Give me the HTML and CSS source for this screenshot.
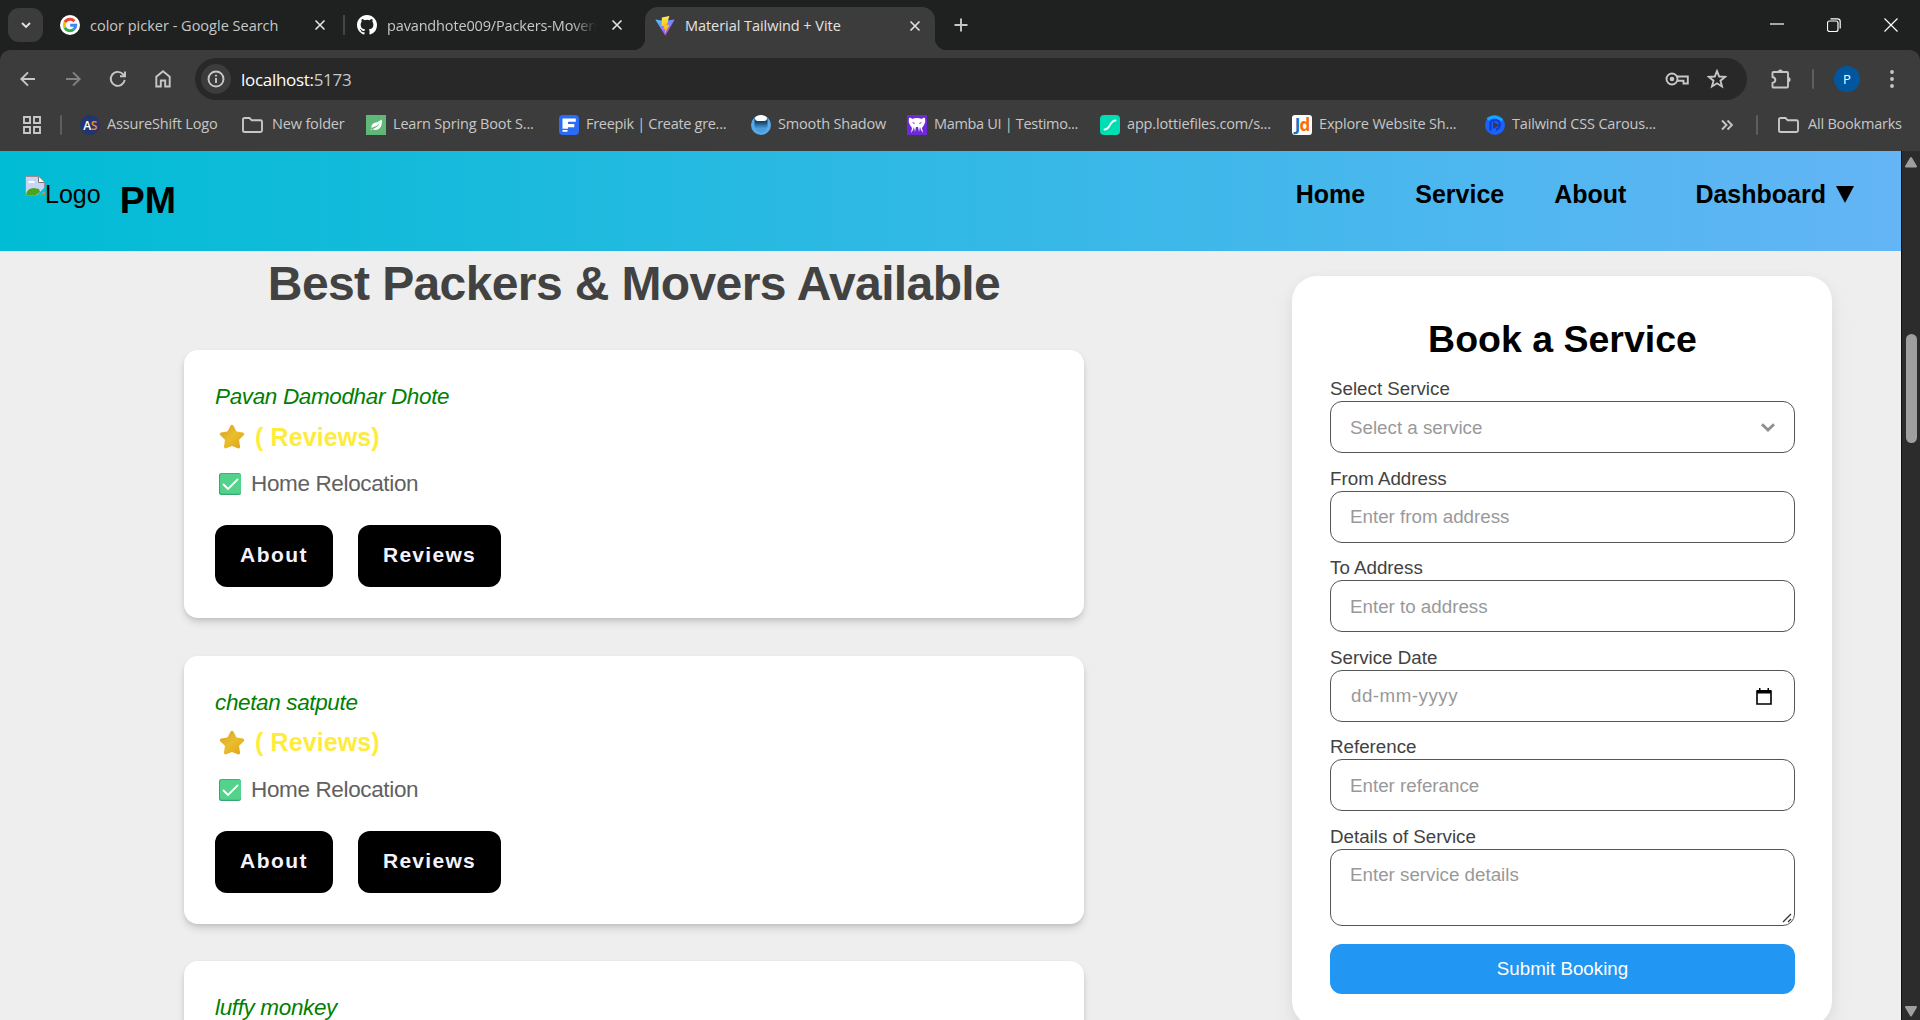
FILE: index.html
```html
<!DOCTYPE html>
<html lang="en">
<head>
<meta charset="utf-8">
<title>Material Tailwind + Vite</title>
<link rel="stylesheet" href="styles.css">
</head>
<body>
<div class="browser">
  <div class="tabstrip">
    <div class="tab-search"><svg width="14" height="14" viewBox="0 0 14 14"><path d="M3 5l4 4 4-4" class="line"/></svg></div>
    <div class="tab tab-one">
      <svg class="fav" viewBox="0 0 48 48"><circle cx="24" cy="24" r="24" fill="#fff"/><g fill="none" stroke-width="7"><path d="M34.5 14.8A14 14 0 0 0 11.7 17.5" stroke="#ea4335"/><path d="M11.7 17.5a14 14 0 0 0 0 13" stroke="#fbbc05"/><path d="M11.7 30.5A14 14 0 0 0 33 34.7" stroke="#34a853"/><path d="M33 34.7A14 14 0 0 0 37.8 24.5H24.5" stroke="#4285f4"/></g></svg>
      <span class="tab-title t1">color picker - Google Search</span>
      <svg class="x" viewBox="0 0 12 12"><path d="M1.5 1.5l9 9m0-9l-9 9" class="line"/></svg>
    </div>
    <i class="tab-sep"></i>
    <div class="tab tab-two">
      <svg class="fav" viewBox="0 0 16 16"><path fill="#fff" d="M8 0C3.58 0 0 3.58 0 8c0 3.54 2.29 6.53 5.47 7.59.4.07.55-.17.55-.38 0-.19-.01-.82-.01-1.49-2.01.37-2.53-.49-2.69-.94-.09-.23-.48-.94-.82-1.13-.28-.15-.68-.52-.01-.53.63-.01 1.08.58 1.23.82.72 1.21 1.87.87 2.33.66.07-.52.28-.87.51-1.07-1.78-.2-3.64-.89-3.64-3.95 0-.87.31-1.59.82-2.15-.08-.2-.36-1.02.08-2.12 0 0 .67-.21 2.2.82a7.6 7.6 0 0 1 4 0c1.53-1.04 2.2-.82 2.2-.82.44 1.1.16 1.92.08 2.12.51.56.82 1.27.82 2.15 0 3.07-1.87 3.75-3.65 3.95.29.25.54.73.54 1.48 0 1.07-.01 1.93-.01 2.2 0 .21.15.46.55.38A8 8 0 0 0 16 8c0-4.42-3.58-8-8-8z"/></svg>
      <span class="tab-title t2">pavandhote009/Packers-Movers</span>
      <svg class="x" viewBox="0 0 12 12"><path d="M1.5 1.5l9 9m0-9l-9 9" class="line"/></svg>
    </div>
    <div class="tab tab-active">
      <svg class="fav" viewBox="0 0 32 32"><defs><linearGradient id="va" x1="0" y1="0" x2=".7" y2="1"><stop stop-color="#41d1ff"/><stop offset="1" stop-color="#bd34fe"/></linearGradient><linearGradient id="vb" x1="0" y1="0" x2="0" y2="1"><stop stop-color="#ffea83"/><stop offset=".2" stop-color="#ffdd35"/><stop offset="1" stop-color="#ffa800"/></linearGradient></defs><path fill="url(#va)" d="M.5 5.500L15 8l16.500-2.500L16.500 31.500z"/><path fill="url(#vb)" d="M23 0L11 2.300l-.8 14.200 4.500-1-1.300 6 3.200-.8-1.500 8.500 8.400-15.500-4.800.9z"/></svg>
      <span class="tab-title t3">Material Tailwind + Vite</span>
      <svg class="x" viewBox="0 0 12 12"><path d="M1.5 1.500l9 9m0-9l-9 9" class="line"/></svg>
    </div>
    <svg class="plus" viewBox="0 0 14 14"><path d="M7 .5v13M.5 7h13" class="line"/></svg>
    <div class="window-buttons">
      <svg width="14" height="14" viewBox="0 0 14 14"><path d="M0 6h14" class="thin"/></svg>
      <svg width="14" height="14" viewBox="0 0 14 14"><rect x=".5" y="3" width="10.500" height="10.500" rx="2" class="thin"/><path d="M3.500 .8h7a2.700 2.700 0 0 1 2.700 2.700v7" class="thin"/></svg>
      <svg width="14" height="14" viewBox="0 0 14 14"><path d="M.5.5l13 13m0-13l-13 13" class="thin"/></svg>
    </div>
  </div>
  <div class="toolbar">
    <svg class="tool" viewBox="0 0 20 20"><path d="M17 10H3.500M10 3.300L3.300 10l6.700 6.700" class="line"/></svg>
    <svg class="tool dim" viewBox="0 0 20 20"><path d="M3 10h13.500M10 3.300l6.700 6.700-6.700 6.700" class="line"/></svg>
    <svg class="tool" viewBox="0 0 20 20"><path d="M16.700 10.800A7 7 0 1 1 15 5.200l1.800 1.800M17 2.500V7.300h-5" class="line"/></svg>
    <svg class="tool" viewBox="0 0 20 20"><path d="M3.300 17.500V7.700L10 2.200l6.700 5.500v9.800h-4.500v-6H7.800v6z" class="line"/></svg>
    <div class="omnibox">
      <div class="info"><svg width="18" height="18" viewBox="0 0 18 18"><circle cx="9" cy="9" r="7.500" class="line"/><path d="M9 8v5M9 4.800v1.700" class="line"/></svg></div>
      <span class="url">localhost:<span class="port">5173</span></span>
      <svg class="key" viewBox="0 0 24 16"><circle cx="7" cy="8" r="5.500" class="line"/><circle cx="7" cy="8" r="2.300" fill="#c7c7c7"/><path d="M12 5.500h10.800v7h-4.300V9.800H12" class="line"/></svg>
      <svg class="tool star-tool" viewBox="0 0 20 20"><path d="M10 2l2.200 5.500 5.800.4-4.500 3.800 1.500 5.800-5-3.200-5 3.200 1.500-5.800L2 7.900l5.800-.4z" class="line"/></svg>
    </div>
    <svg class="tool puzzle" viewBox="0 0 20 20"><path d="M1.500 4Q1.500 3 2.500 3H16q1 0 1 1v13.500q0 1-1 1H2.500q-1 0-1-1V14c3.800-1 3.800-5 0-6z" class="line"/><path d="M6.700 3a2.600 2.600 0 0 1 5.200 0zM17 8a2.600 2.600 0 0 1 0 5.200z" fill="#c7c7c7"/></svg>
    <i class="bar-sep"></i>
    <div class="avatar">P</div>
    <svg class="dots" viewBox="0 0 6 20"><circle cx="3" cy="3" r="1.900"/><circle cx="3" cy="10" r="1.900"/><circle cx="3" cy="17" r="1.900"/></svg>
  </div>
  <div class="bookmarks">
    <svg class="apps" viewBox="0 0 18 18"><path d="M1 1h6v6H1zM11 1h6v6h-6zM1 11h6v6H1zM11 11h6v6h-6z" class="line"/></svg>
    <i class="bar-sep"></i>
    <div class="bm b1"><span class="bi as"><b>A</b><b class="s">S</b></span><span class="bt">AssureShift Logo</span></div>
    <div class="bm b2"><svg class="folder" viewBox="0 0 21 16"><path d="M1 2.500Q1 1 2.500 1h5l2.300 2.300h8.700q1.500 0 1.500 1.500v8.700q0 1.500-1.500 1.500h-16Q1 15 1 13.500z" class="line"/></svg><span class="bt">New folder</span></div>
    <div class="bm b3"><svg class="bi" viewBox="0 0 20 20"><path fill="#5fb878" d="M0 0h20v20H0z"/><path fill="#fff" d="M15.800 4.500c.6 5-1 10.500-6.500 10.500-1.500 0-2.500-.6-3-.9 3.500-.7 6.500-3 7.500-6-2 2.800-5.500 4-8.300 4.800C4.500 7 12 8 15.800 4.500zM4.300 14.500l1.500-.8v1.300z"/></svg><span class="bt">Learn Spring Boot S...</span></div>
    <div class="bm b4"><svg class="bi" viewBox="0 0 20 20"><rect width="20" height="20" rx="4" fill="#2b6cf6"/><path d="M3.500 3.500h13.300v3.200H9V9h6.300v3.200H9v1.600H3.500zM3.500 15h5v1.800h-5z" fill="#fff"/></svg><span class="bt">Freepik | Create gre...</span></div>
    <div class="bm b5"><svg class="bi" viewBox="0 0 20 20"><defs><linearGradient id="sm" x1="0" y1="0" x2="0" y2="1"><stop offset=".25" stop-color="#15436b"/><stop offset=".7" stop-color="#4c9ddd"/></linearGradient></defs><circle cx="10" cy="10" r="10" fill="#58aae8"/><path d="M3.500 3.500h13V11a6.500 6.500 0 0 1-13 0z" fill="url(#sm)"/><path d="M4 3q0-2 6-3 6 1 6 3 0 3-3 3H7Q4 6 4 3z" fill="#fff"/></svg><span class="bt">Smooth Shadow</span></div>
    <div class="bm b6"><svg class="bi" viewBox="0 0 20 20"><path fill="#6d28d9" d="M0 0h20v20H0z"/><path fill="#fff" d="M2 3q2-1 3 1 5-2 10 0 1-2 3-1 1 4-1 7l-2 3 1 5-2-3-1-3-1 5-1-5h-2l-1 5-1-5-1 3-2 3 1-5-2-3Q1 7 2 3z"/><path fill="#6d28d9" d="M5 7l3 1-1 1zM15 7l-3 1 1 1z"/></svg><span class="bt">Mamba UI | Testimo...</span></div>
    <div class="bm b7"><svg class="bi" viewBox="0 0 20 20"><rect width="20" height="20" rx="4" fill="#00ddb3"/><path d="M4.500 14.500c6 0 5-9 11-9" stroke="#fff" stroke-width="1.800" stroke-linecap="round" fill="none"/></svg><span class="bt">app.lottiefiles.com/s...</span></div>
    <div class="bm b8"><span class="bi jd"><b>J</b><b class="d">d</b></span><span class="bt">Explore Website Sh...</span></div>
    <div class="bm b9"><svg class="bi" viewBox="0 0 20 20"><circle cx="10" cy="10" r="10" fill="#1a63f7"/><path d="M2.500 4.500Q9-1 17 5.500" stroke="#13a8ff" stroke-width="3" fill="none"/><path d="M5.500 15.500V7q4-4 8.500-.5 3 5-3 8.500" stroke="#1238d8" stroke-width="2.300" fill="none"/><path d="M8 6.500l6.500 3.800L8 14z" fill="#333b55"/></svg><span class="bt">Tailwind CSS Carous...</span></div>
    <svg class="more" viewBox="0 0 12 12"><path d="M1 1.500L5.500 6 1 10.500M6.500 1.500L11 6l-4.500 4.500" class="line"/></svg>
    <i class="bar-sep last"></i>
    <div class="bm b10"><svg class="folder" viewBox="0 0 21 16"><path d="M1 2.500Q1 1 2.500 1h5l2.300 2.300h8.700q1.500 0 1.500 1.500v8.700q0 1.500-1.500 1.500h-16Q1 15 1 13.500z" class="line"/></svg><span class="bt">All Bookmarks</span></div>
  </div>
</div>
<div class="viewport">
  <div class="page">
    <header class="site-header">
      <div class="brand">
        <svg class="broken" viewBox="0 0 20 20"><path d="M.5.5h13l6 6v13H.5z" fill="#c6d5f5" stroke="#9a8c90"/><path d="M13.500.5v6h6" fill="#fff" stroke="#777"/><path d="M3 7q1-3 3-2 3-1 4 2z" fill="#fff"/><path d="M1 19q1-7 8-7l5 1 1 3-4 3z" fill="#48a51c"/><path d="M11 20l9-9v4l-5 5z" fill="#0bbcd8"/><path d="M16 19l3-2v2z" fill="#48a51c"/></svg><span class="alt">Logo</span>
        <span class="pm">PM</span>
      </div>
      <nav class="nav"><a>Home</a><a>Service</a><a class="about">About</a><a class="dash">Dashboard <svg width="18" height="17" viewBox="0 0 18 17"><path d="M0 0h18L9 17z"/></svg></a></nav>
    </header>
    <main class="content">
      <section class="listing">
        <h1>Best Packers &amp; Movers Available</h1>
        <article class="card">
          <div class="name">Pavan Damodhar Dhote</div>
          <div class="rating"><svg class="star" viewBox="0 0 26 26"><use href="#star"/></svg>( Reviews)</div>
          <div class="service"><svg class="check" viewBox="0 0 22 22"><use href="#check"/></svg>Home Relocation</div>
          <div class="actions"><button>About</button><button>Reviews</button></div>
        </article>
        <article class="card">
          <div class="name">chetan satpute</div>
          <div class="rating"><svg class="star" viewBox="0 0 26 26"><use href="#star"/></svg>( Reviews)</div>
          <div class="service"><svg class="check" viewBox="0 0 22 22"><use href="#check"/></svg>Home Relocation</div>
          <div class="actions"><button>About</button><button>Reviews</button></div>
        </article>
        <article class="card">
          <div class="name">luffy monkey</div>
        </article>
      </section>
      <form class="booking">
        <h2>Book a Service</h2>
        <div class="field"><label>Select Service</label><div class="box">Select a service<svg class="caret" viewBox="0 0 14 9"><path d="M1 1.300L7 7l6-5.700"/></svg></div></div>
        <div class="field"><label>From Address</label><div class="box">Enter from address</div></div>
        <div class="field"><label>To Address</label><div class="box">Enter to address</div></div>
        <div class="field"><label>Service Date</label><div class="box date">dd-mm-yyyy<svg class="cal" viewBox="0 0 16 17"><path d="M1 3h14v13H1z" fill="none" stroke="#000" stroke-width="1.600"/><path d="M1 2h14v3.500H1zM3 0h1.500v3H3zM11.500 0H13v3h-1.500z"/></svg></div></div>
        <div class="field"><label>Reference</label><div class="box">Enter referance</div></div>
        <div class="field"><label>Details of Service</label><div class="box area">Enter service details<svg class="grip" viewBox="0 0 10 10"><path d="M1 9l8-8M6 9l3-3"/></svg></div></div>
        <button class="submit" type="button">Submit Booking</button>
      </form>
    </main>
  </div>
  <div class="scrollbar">
    <svg width="14" height="12" viewBox="0 0 14 12"><path d="M7 2l5 8.500H2z"/></svg>
    <div class="thumb"></div>
    <svg class="down" width="14" height="12" viewBox="0 0 14 12"><path d="M7 10.500L12 2H2z"/></svg>
  </div>
</div>
<svg class="symbols" width="0" height="0"><defs>
  <linearGradient id="gold" x1="0" y1="0" x2="1" y2="1"><stop stop-color="#d9a32e"/><stop offset=".5" stop-color="#e9bf2c"/><stop offset="1" stop-color="#e0a41f"/></linearGradient>
  <symbol id="star" viewBox="0 0 26 26"><path d="M13 2.500l3.300 6.400 7.200 1.200-5.300 5.200 1.200 7.400-6.400-2.500-6.400 2.500 1.200-7.400L2.500 10.100l7.200-1.200z" fill="url(#gold)" stroke="url(#gold)" stroke-width="3.400" stroke-linejoin="round"/></symbol>
  <symbol id="check" viewBox="0 0 22 22"><rect width="22" height="22" rx="2.500" fill="#36a772"/><rect x="1" y=".7" width="21" height="20" rx="2" fill="#53d28b"/><path d="M4.500 11.500l4.500 4.500 9.500-9.500" fill="none" stroke="#fff" stroke-width="1.900" stroke-linecap="round"/></symbol>
</defs></svg>
</body>
</html>
```
FILE: styles.css
```css
* { box-sizing: border-box; }
html, body { height: 100%; }
body { margin: 0; overflow: hidden; font-family: "Liberation Sans", Arial, sans-serif; display: flex; flex-direction: column; background: #eee; }
svg { flex: none; display: block; }
.line { fill: none; stroke: #c7c7c7; stroke-width: 1.9; }
.thin { fill: none; stroke: #fff; stroke-width: 1.2; }

.browser { height: 151px; flex: none; background: #1f2120; color: #c7c7c7; font-family: "Open Sans", "Noto Sans", sans-serif; font-size: 14.5px; }
.tabstrip { height: 50px; display: flex; align-items: center; padding-left: 8px; }
.tab-search { width: 35px; height: 34px; border-radius: 11px; background: #3c3c3c; display: flex; align-items: center; justify-content: center; }
.tab-search .line { stroke: #e3e3e3; }
.tab { display: flex; align-items: center; height: 42px; gap: 10px; }
.tab-one { margin-left: 17px; width: 266px; }
.tab-sep { width: 2px; height: 20px; background: #454746; margin: 0 12px 0 17px; }
.tab-two { width: 266px; }
.tab-active { width: 290px; height: 43px; margin: 7px 0 0 22px; padding: 0 14px 6px 10px; background: #3c3c3c; border-radius: 13px 13px 0 0; position: relative; color: #e3e3e3; }
.tab-active::before, .tab-active::after { content: ""; position: absolute; bottom: 0; width: 12px; height: 12px; }
.tab-active::before { left: -12px; background: radial-gradient(circle at 0 0, #1f2120 12px, #3c3c3c 12.5px); }
.tab-active::after { right: -12px; background: radial-gradient(circle at 100% 0, #1f2120 12px, #3c3c3c 12.5px); }
.fav { width: 20px; height: 20px; }
.tab-title { flex: 1; overflow: hidden; white-space: nowrap; line-height: 22px; padding-top: 1px; }
.t1 { letter-spacing: 0; }
.t2 { letter-spacing: -.15px; -webkit-mask-image: linear-gradient(90deg, #000 88%, transparent); mask-image: linear-gradient(90deg, #000 88%, transparent); margin-right: 4px; }
.t3 { letter-spacing: -.05px; }
.x { width: 12px; height: 12px; }
.x .line { stroke: #e3e3e3; stroke-width: 1.6; }
.plus { width: 14px; height: 14px; margin-left: 19px; }
.window-buttons { margin-left: auto; padding-right: 22px; display: flex; gap: 43px; }

.toolbar { height: 58px; padding: 0 25px 0 18px; background: #3c3c3c; border-radius: 10px 10px 0 0; display: flex; align-items: center; }
.tool { width: 20px; height: 20px; margin-right: 25px; }
.dim { opacity: .5; }
.omnibox { width: 1552px; height: 42px; flex: none; margin-left: -3px; border-radius: 21px; background: #282828; display: flex; align-items: center; padding-left: 6px; }
.info { width: 30px; height: 30px; border-radius: 50%; background: #3c3c3c; display: flex; align-items: center; justify-content: center; }
.url { margin-left: 10px; font-size: 17px; color: #fff; letter-spacing: -.3px; }
.port { color: #c7c7c7; }
.key { width: 24px; height: 16px; margin-left: auto; margin-right: 18px; }
.star-tool { margin-right: 20px; }
.puzzle { margin: 0 21px 0 24px; }
.bar-sep { width: 2px; height: 20px; flex: none; background: #5e5e5e; border-radius: 1px; }
.avatar { width: 26px; height: 26px; flex: none; margin: 0 auto 0 20px; border-radius: 50%; background: #0057a0; color: #fff; font-size: 13px; display: flex; align-items: center; justify-content: center; }
.dots { width: 6px; height: 20px; fill: #c7c7c7; }
.bookmarks { height: 43px; background: #3c3c3c; display: flex; align-items: center; padding: 0 0 9px 23px; }
.apps { width: 18px; height: 18px; margin-right: 19px; }
.bm { display: flex; align-items: center; gap: 7px; white-space: nowrap; flex: none; letter-spacing: -.17px; }
.bt { line-height: 20px; margin-top: -2px; }
.bi { width: 20px; height: 20px; flex: none; }
.folder { width: 21px; height: 16px; margin-right: 2px; }
.b1 { width: 162px; margin-left: 18px; } .b2 { width: 124px; } .b3 { width: 193px; } .b4 { width: 192px; letter-spacing: -.3px; } .b5 { width: 156px; }
.b6 { width: 193px; letter-spacing: -.32px; } .b7 { width: 192px; } .b8 { width: 193px; } .b9 { width: 236px; } .b10 { letter-spacing: -.22px; }
.as { border-radius: 50%; background: #22356f; color: #fff; display: flex; align-items: center; justify-content: center; font-size: 12px; letter-spacing: -.5px; }
.as b { font-weight: 600; } .as .s { color: #f28c28; }
.jd { border-radius: 3px; background: #fff; display: flex; align-items: center; justify-content: center; font-size: 17px; letter-spacing: -1px; color: #1274c0; line-height: 20px; }
.jd .d { color: #ff6c00; }
.more { width: 12px; height: 12px; }
.last { margin: 0 20px 0 23px; }

.viewport { flex: 1; display: flex; min-height: 0; }
.page { width: 1901px; display: flex; flex-direction: column; overflow: hidden; background: #eee; }
.site-header { height: 100px; flex: none; padding: 25px 47px 0 25px; display: flex; justify-content: space-between; align-items: flex-start; background: linear-gradient(90deg, #00bcd4, #64b5f6); }
.brand { display: flex; align-items: flex-start; }
.broken { width: 20px; height: 20px; }
.alt { font-size: 25px; line-height: 28px; padding-top: 4px; }
.pm { font-size: 37.5px; font-weight: 700; line-height: 42px; margin-left: 19px; padding-top: 3px; }
.nav { display: flex; font-size: 25px; font-weight: 700; line-height: 28px; padding-top: 4px; }
.nav a { margin-right: 50px; }
.nav .about { margin-right: 69px; }
.nav .dash { margin: 0; display: flex; align-items: center; gap: 10px; }
.content { flex: 1; min-height: 0; display: flex; align-items: flex-start; padding-left: 184px; gap: 208px; }
.listing { width: 900px; flex: none; }
h1 { margin: 0; height: 99px; padding-top: 5px; text-align: center; color: #424242; font-size: 48px; line-height: 56px; letter-spacing: -.62px; white-space: nowrap; }
.card { height: 268px; margin-bottom: 37.6px; padding: 32px 31px 0; background: #fff; border-radius: 14px; box-shadow: 0 5px 8px -1px rgba(0,0,0,.14), 0 2px 5px -1px rgba(0,0,0,.1); }
.name { color: green; font-style: italic; font-size: 22.5px; line-height: 30px; letter-spacing: -.36px; }
.rating { height: 50px; display: flex; align-items: center; gap: 10px; padding-left: 4px; color: #ffeb3b; font-size: 25px; font-weight: 700; letter-spacing: .1px; }
.star { width: 26px; height: 26px; }
.service { height: 44px; display: flex; align-items: center; gap: 10px; padding-left: 4px; color: #616161; font-size: 22.5px; letter-spacing: -.36px; }
.check { width: 22px; height: 22px; }
.actions { display: flex; gap: 25px; margin-top: 19px; }
.actions button { width: 118px; height: 62px; padding: 0 0 2px; border: 0; border-radius: 12px; background: #000; color: #f5f2ff; font: 700 21px "Liberation Sans", Arial, sans-serif; letter-spacing: 1.45px; }
.actions button + button { width: 143px; letter-spacing: 1.3px; }
.booking { width: 540px; height: 750px; flex: none; margin-top: 25px; padding: 38px 37px 0 38px; background: #fff; border-radius: 25px; box-shadow: 0 12px 24px rgba(0,0,0,.06), 0 2px 12px rgba(0,0,0,.04); font-size: 18.75px; }
h2 { margin: 0; height: 63px; text-align: center; font-size: 37.5px; line-height: 50px; }
.field { height: 89.6px; color: #424242; }
.field label { display: block; height: 24px; line-height: 24px; }
.box { height: 52px; border: 1px solid #555; border-radius: 12px; padding: 1px 18px 0 19px; display: flex; align-items: center; justify-content: space-between; color: #999; }
.caret { width: 14px; height: 9px; margin-right: 1px; fill: none; stroke: #8f8f8f; stroke-width: 2.8; }
.date { padding-left: 20px; letter-spacing: .5px; }
.cal { width: 16px; height: 17px; margin-right: 4px; }
.area { height: 77px; align-items: flex-start; padding: 14px 2px 2px 19px; line-height: 22px; }
.grip { width: 10px; height: 10px; align-self: flex-end; stroke: #333; stroke-width: 1.3; }
.submit { width: 100%; height: 50px; margin-top: 29px; padding: 1px 0 0; border: 0; border-radius: 12px; background: #2196f3; color: #fff; font: 18.75px "Liberation Sans", Arial, sans-serif; }
.scrollbar { width: 19px; background: #2c2c2c; border-left: 1px solid #111; display: flex; flex-direction: column; align-items: center; padding: 5px 0 3px; fill: #9f9f9f; }
.scrollbar path { stroke: #9f9f9f; stroke-width: 2; stroke-linejoin: round; }
.thumb { width: 11px; height: 109px; margin-top: 166px; border-radius: 6px; background: #9f9f9f; }
.down { margin-top: auto; }
.symbols { position: absolute; }
```
